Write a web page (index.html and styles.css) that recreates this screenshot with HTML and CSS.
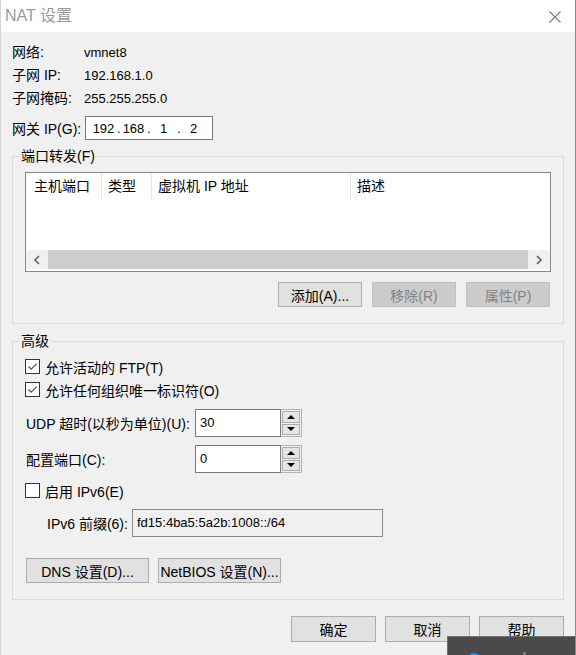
FILE: index.html
```html
<!DOCTYPE html>
<html lang="zh-CN">
<head>
  <meta charset="UTF-8">
  <title>NAT 设置</title>
  <link rel="stylesheet" href="styles.css">
</head>
<body>

  <div class="dialog">

    <!-- Title bar -->
    <div class="titlebar">
      <span class="title">NAT 设置</span>
      <svg class="close" width="12" height="12" viewBox="0 0 12 12">
        <path d="M0.5 0.5 L11.5 11.5 M11.5 0.5 L0.5 11.5" stroke="#7a7a7a" stroke-width="1.1" fill="none"/>
      </svg>
    </div>

    <div class="content">

      <!-- Network info -->
      <div class="info">
        <span class="label">网络:</span><span class="value">vmnet8</span>
        <span class="label">子网 IP:</span><span class="value">192.168.1.0</span>
        <span class="label">子网掩码:</span><span class="value">255.255.255.0</span>
      </div>

      <div class="gateway">
        <span class="label">网关 IP(G):</span>
        <div class="ip-box">
          <span class="seg">192</span><span class="dot">.</span>
          <span class="seg">168</span><span class="dot">.</span>
          <span class="seg">1</span><span class="dot">.</span>
          <span class="seg">2</span>
        </div>
      </div>

      <!-- Port forwarding -->
      <fieldset class="group ports">
        <legend>端口转发(F)</legend>
        <div class="listview">
          <div class="lv-header">
            <div class="col col-host">主机端口</div>
            <div class="col col-type">类型</div>
            <div class="col col-ip">虚拟机 IP 地址</div>
            <div class="col col-desc">描述</div>
          </div>
          <div class="lv-body"></div>
          <div class="hscroll">
            <div class="arrow">
              <svg width="8" height="10" viewBox="0 0 8 10"><path d="M6 1 L2 5 L6 9" stroke="#606060" stroke-width="1.6" fill="none"/></svg>
            </div>
            <div class="thumb"></div>
            <div class="arrow">
              <svg width="8" height="10" viewBox="0 0 8 10"><path d="M2 1 L6 5 L2 9" stroke="#606060" stroke-width="1.6" fill="none"/></svg>
            </div>
          </div>
        </div>
        <div class="btn-row">
          <button class="btn">添加(A)...</button>
          <button class="btn" disabled>移除(R)</button>
          <button class="btn" disabled>属性(P)</button>
        </div>
      </fieldset>

      <!-- Advanced -->
      <fieldset class="group advanced">
        <legend>高级</legend>

        <div class="check-row">
          <span class="checkbox checked">
            <svg width="13" height="13" viewBox="0 0 13 13"><path d="M2.5 6.5 L5.2 9.2 L10.8 3.6" stroke="#555" stroke-width="1.3" fill="none"/></svg>
          </span>
          <span>允许活动的 FTP(T)</span>
        </div>
        <div class="check-row">
          <span class="checkbox checked">
            <svg width="13" height="13" viewBox="0 0 13 13"><path d="M2.5 6.5 L5.2 9.2 L10.8 3.6" stroke="#555" stroke-width="1.3" fill="none"/></svg>
          </span>
          <span>允许任何组织唯一标识符(O)</span>
        </div>

        <div class="spin-row first">
          <span class="spin-label">UDP 超时(以秒为单位)(U):</span>
          <div class="spin">
            <div class="spin-input">30</div>
            <div class="spin-btns">
              <div class="spin-btn"><span class="tri-up"></span></div>
              <div class="spin-btn"><span class="tri-down"></span></div>
            </div>
          </div>
        </div>
        <div class="spin-row">
          <span class="spin-label">配置端口(C):</span>
          <div class="spin">
            <div class="spin-input">0</div>
            <div class="spin-btns">
              <div class="spin-btn"><span class="tri-up"></span></div>
              <div class="spin-btn"><span class="tri-down"></span></div>
            </div>
          </div>
        </div>

        <div class="check-row ipv6">
          <span class="checkbox"></span>
          <span>启用 IPv6(E)</span>
        </div>
        <div class="prefix-row">
          <span class="prefix-label">IPv6 前缀(6):</span>
          <div class="prefix-input">fd15:4ba5:5a2b:1008::/64</div>
        </div>

        <div class="btn-row left">
          <button class="btn wide">DNS 设置(D)...</button>
          <button class="btn wide">NetBIOS 设置(N)...</button>
        </div>
      </fieldset>

      <!-- Dialog buttons -->
      <div class="footer">
        <button class="btn dlg">确定</button>
        <button class="btn dlg">取消</button>
        <button class="btn dlg">帮助</button>
      </div>

    </div>

    <!-- Popup peeking in from the taskbar -->
    <div class="peek">
      <span class="peek-dot"></span>
      <span class="peek-mark"></span>
    </div>

  </div>

</body>
</html>
```

FILE: styles.css
```css
* {
  box-sizing: border-box;
}

body {
  margin: 0;
  font-family: "Liberation Sans", "Noto Sans CJK SC", sans-serif;
  font-size: 14px;
  color: #000;
  background-color: #f0f0f0;
}

.dialog {
  position: relative;
  width: 576px;
  height: 655px;
  background-color: #f0f0f0;
  border-left: 1px solid #d4d4d4;
  border-right: 1px solid #8a8a8a;
  overflow: hidden;
}

.titlebar {
  height: 32px;
  background-color: #fff;
  display: flex;
  align-items: center;
  justify-content: space-between;
  padding: 0 14px 0 4px;
}

.title {
  font-size: 16px;
  color: #9a9a9a;
  line-height: 20px;
}

.close {
  margin-top: 1px;
}

.content {
  padding: 9px 11px 0 11px;
}

/* Network info */
.info {
  display: grid;
  grid-template-columns: 72px 1fr;
  line-height: 23px;
}

.value {
  font-size: 13px;
}

.gateway {
  display: flex;
  align-items: center;
  margin-top: 6px;
  height: 24px;
}

.gateway .label {
  width: 73px;
}

.ip-box {
  display: flex;
  align-items: center;
  width: 128px;
  height: 24px;
  padding-left: 4px;
  background-color: #fff;
  border: 1px solid #7a7a7a;
  font-size: 13px;
}

.seg {
  width: 27px;
  text-align: center;
}

.dot {
  width: 3px;
  text-align: center;
}

/* Group boxes */
.group {
  margin: 0;
  border: 1px solid #dcdcdc;
  min-width: 0;
}

.group legend {
  margin-left: -6px;
  padding: 0 2px;
  line-height: 16px;
}

.ports {
  margin-top: 8px;
  padding: 8px 12px 16px 12px;
}

.advanced {
  margin-top: 9px;
  padding: 6px 12px 16px 12px;
}

/* List view */
.listview {
  height: 100px;
  background-color: #fff;
  border: 1px solid #828790;
}

.lv-header {
  display: flex;
  height: 26px;
}

.col {
  line-height: 26px;
  padding-left: 6px;
  border-right: 1px solid #e5e5e5;
  white-space: nowrap;
}

.col-host {
  width: 76px;
  padding-left: 8px;
}

.col-type {
  width: 50px;
}

.col-ip {
  width: 199px;
}

.col-desc {
  flex: 1;
  border-right: none;
}

.lv-body {
  height: 51px;
}

.hscroll {
  display: flex;
  height: 19px;
  background-color: #f0f0f0;
}

.arrow {
  width: 22px;
  display: flex;
  align-items: center;
  justify-content: center;
}

.thumb {
  flex: 1;
  background-color: #cdcdcd;
}

/* Buttons */
.btn-row {
  display: flex;
  justify-content: flex-end;
  gap: 10px;
  margin-top: 10px;
  padding-right: 1px;
}

.btn-row.left {
  justify-content: flex-start;
  gap: 9px;
  margin-top: 21px;
  padding-left: 1px;
}

.btn {
  width: 84px;
  height: 25px;
  padding: 0;
  font-family: inherit;
  font-size: 14px;
  color: #000;
  background-color: #e1e1e1;
  border: 1px solid #adadad;
}

.btn:disabled {
  color: #838383;
  background-color: #cccccc;
  border-color: #bfbfbf;
}

.btn.wide {
  width: 123px;
}

/* Checkboxes */
.check-row {
  display: flex;
  align-items: center;
  gap: 5px;
  height: 23px;
}

.check-row.ipv6 {
  margin-top: 6px;
}

.checkbox {
  width: 15px;
  height: 15px;
  background-color: #fff;
  border: 1px solid #333;
  display: flex;
}

/* Spin boxes */
.spin-row {
  display: flex;
  align-items: center;
  margin-top: 8px;
}

.spin-label {
  width: 170px;
  padding-left: 1px;
}

.spin {
  display: flex;
  height: 28px;
}

.spin-input {
  width: 86px;
  height: 28px;
  padding: 3px 0 0 4px;
  line-height: 20px;
  background-color: #fff;
  border: 1px solid #7a7a7a;
  font-size: 13px;
}

.spin-btns {
  width: 21px;
  display: flex;
  flex-direction: column;
  gap: 1px;
  padding: 1px;
  border: 1px solid #b4b4b4;
  border-left: none;
}

.spin-btn {
  flex: 1;
  display: flex;
  align-items: center;
  justify-content: center;
  background-color: #e5e5e5;
  border: 1px solid #acacac;
}

.tri-up {
  width: 0;
  height: 0;
  border-left: 4px solid transparent;
  border-right: 4px solid transparent;
  border-bottom: 4px solid #000;
}

.tri-down {
  width: 0;
  height: 0;
  border-left: 4px solid transparent;
  border-right: 4px solid transparent;
  border-top: 4px solid #000;
}

/* IPv6 prefix */
.prefix-row {
  display: flex;
  align-items: center;
  margin-top: 7px;
}

.prefix-label {
  width: 107px;
  padding-left: 22px;
}

.prefix-input {
  width: 251px;
  height: 28px;
  padding: 3px 0 0 4px;
  line-height: 20px;
  background-color: #f0f0f0;
  border: 1px solid #8a8a8a;
  font-size: 13px;
}

/* Footer */
.footer {
  display: flex;
  justify-content: flex-end;
  gap: 9px;
  margin-top: 16px;
}

.btn.dlg {
  width: 85px;
  height: 26px;
}

/* Taskbar popup overlapping the corner */
.peek {
  position: absolute;
  left: 446px;
  top: 636px;
  right: 0;
  bottom: 0;
  background-color: #4a4a4a;
  border-top: 1px solid #6e6e6e;
  border-left: 1px solid #6e6e6e;
}

.peek-dot {
  position: absolute;
  left: 20px;
  top: 16px;
  width: 12px;
  height: 12px;
  border-radius: 50%;
  background-color: #1e8fff;
}

.peek-mark {
  position: absolute;
  left: 75px;
  top: 15px;
  width: 3px;
  height: 5px;
  background-color: #b07050;
}
```
